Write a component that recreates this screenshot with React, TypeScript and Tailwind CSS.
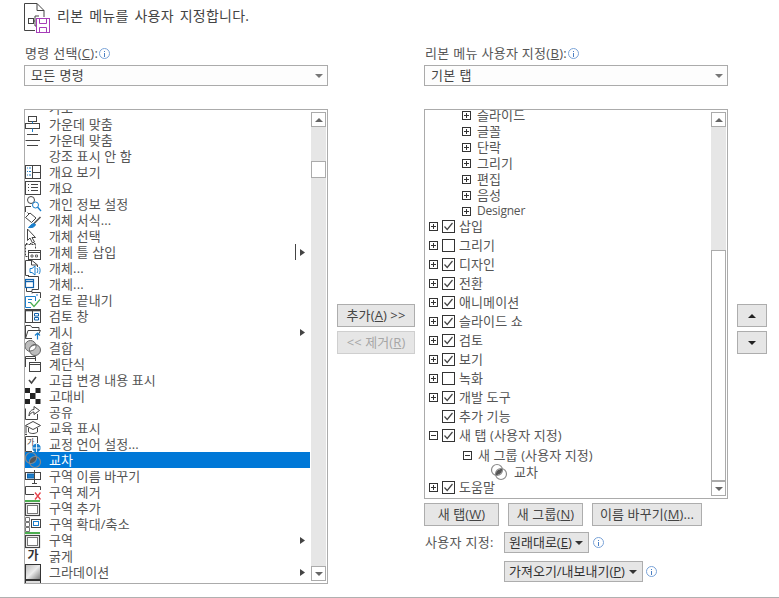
import type { ReactNode } from "react";

const D = "#444444";
const B = "#1b7fcc";

function Ico({ children }: { children?: ReactNode }) {
  return (
    <svg width="16" height="16" viewBox="0 0 16 16" fill="none" stroke={D} strokeWidth="1" className="block shrink-0 overflow-visible">
      {children}
    </svg>
  );
}

function Intersect({ size = 16 }: { size?: number }) {
  return (
    <svg width={size} height={size} viewBox="0 0 16 16" fill="none" className="block shrink-0 overflow-visible">
      <circle cx="6" cy="6" r="5.5" stroke="#8a8a8a" strokeWidth="1.2" />
      <circle cx="10" cy="10" r="5.5" stroke="#8a8a8a" strokeWidth="1.2" />
      <path d="M5 11 C4.5 7.5 7 5 11 5 C11.5 8.5 8.5 11 5 11Z" fill="#555" />
    </svg>
  );
}

const icons: Record<string, ReactNode> = {
  top: (
    <Ico>
      <path d="M0.5 0V2.5H11L15 -1" />
    </Ico>
  ),
  alignC: (
    <Ico>
      <rect x="3.5" y="0.5" width="8" height="5" />
      <rect x="0.5" y="7.5" width="14" height="5" />
      <path d="M7.5 5.5V7.5M7.5 12.5V16" stroke={B} />
    </Ico>
  ),
  textC: (
    <Ico>
      <path d="M2 2.5H13M0.5 8.5H15M2 13.5H13" />
    </Ico>
  ),
  none: <Ico />,
  outlineView: (
    <Ico>
      <rect x="0.5" y="1.5" width="15" height="13" />
      <path d="M7.5 1.5V14.5M7.5 8.5H15.5" />
      <path d="M2 4H3M4 4H6M2 7.5H3M4 7.5H6M2 11H3M4 11H6" stroke={B} />
    </Ico>
  ),
  outline: (
    <Ico>
      <rect x="0.5" y="1.5" width="15" height="13" />
      <path d="M3 4.5H4M6 4.5H13M3 7.5H4M6 7.5H13M3 10.5H4M6 10.5H13" />
    </Ico>
  ),
  privacy: (
    <Ico>
      <circle cx="6" cy="4" r="3.5" />
      <path d="M0.5 16V10.5H6" />
      <circle cx="10.5" cy="9" r="3" stroke={B} />
      <path d="M12.5 11L16 15" stroke={B} strokeWidth="1.4" />
    </Ico>
  ),
  format: (
    <Ico>
      <path d="M0.5 5.5L5 1L11 6L6.5 10.5Z" />
      <path d="M4 2L2.5 0.5" />
      <path d="M15.5 5L8.5 12" stroke="#555" strokeWidth="1.6" />
      <path d="M8.5 11.5C6.5 12 5 14 3.5 15.5C7 16 10 15 10.5 12.5Z" fill={B} stroke={B} />
    </Ico>
  ),
  select: (
    <Ico>
      <path d="M2.5 1V12.5L5 10L7.5 15L9.5 14L7 9.5H10.5Z" fill="#fff" />
      <path d="M1 15.5H2.5M5 15.5H6.5M9 15.5H10.5" />
    </Ico>
  ),
  placeholder: (
    <Ico>
      <path d="M0.5 0.5H10.5V5M0.5 0.5V12.5H3" strokeDasharray="2 1" />
      <rect x="3.5" y="6.5" width="12" height="9" fill="#fff" />
      <path d="M3.5 8.5H15.5" />
      <path d="M6 11H8V13H6ZM10.5 11H12.5V13H10.5Z" strokeWidth="0.8" />
    </Ico>
  ),
  audio: (
    <Ico>
      <path d="M4 15.5H0.5V0.5H7L12.5 5V7" />
      <path d="M6.5 0.5V5H12.5" />
      <path d="M5 8.5V12.5H7L10 15V6L7 8.5Z" stroke={B} fill="#fff" />
      <path d="M12 8C13 9.5 13 11.5 12 13M14 7C15.5 9 15.5 12 14 14" stroke={B} />
    </Ico>
  ),
  object: (
    <Ico>
      <path d="M3 0.5H13.5V13.5H7V15.5H1.5V12" />
      <rect x="0.5" y="3.5" width="8" height="8" stroke="#0f62ac" strokeWidth="1.2" fill="#fff" />
      <path d="M0.5 5.5H8.5" stroke="#0f62ac" strokeWidth="1.4" />
    </Ico>
  ),
  endReview: (
    <Ico>
      <path d="M7 1.5V0.5H15.5V6" />
      <path d="M0.5 4.5H10.5V9M0.5 4.5V15.5H6" stroke={B} />
      <path d="M3 7.5H7M3 10.5H6M11 3H13" stroke={B} />
      <path d="M5.5 10.5L9 14.5L15 7.5" stroke="#4caf50" strokeWidth="1.2" />
    </Ico>
  ),
  pane: (
    <Ico>
      <rect x="0.5" y="1.5" width="15" height="13" />
      <path d="M0.5 2.5H15.5" strokeWidth="1.6" />
      <path d="M7.5 3V14.5" />
      <path d="M9.5 5.5H13.5V8H9.5ZM9.5 9.5H13.5V12H9.5Z" stroke="#0f62ac" />
    </Ico>
  ),
  publish: (
    <Ico>
      <path d="M0.5 14.5V1.5H5.5L7 3.5H14V6.5M0.5 14.5H7M0.5 14.5L3 6.5H15.5L13 11" />
      <path d="M12.5 15.5V9M10 11.5L12.5 9L15 11.5" stroke={B} strokeWidth="1.2" />
    </Ico>
  ),
  combine: (
    <Ico>
      <circle cx="5.5" cy="6" r="5.5" fill="#bdbdbd" stroke="#666" />
      <circle cx="10" cy="10" r="5.5" fill="#bdbdbd" stroke="#666" />
      <path d="M4.5 11 C4 7.5 6.5 5 11 5 C11.5 8.5 8.5 11 4.5 11Z" fill="#fff" stroke="#666" />
    </Ico>
  ),
  cascade: (
    <Ico>
      <path d="M0.5 11V0.5H10.5V5" />
      <path d="M0.5 2.5H10.5" />
      <rect x="4.5" y="6.5" width="11" height="9" fill="#fff" />
      <path d="M4.5 8.5H15.5" />
    </Ico>
  ),
  check: (
    <Ico>
      <path d="M4 8L6.5 11L11 5" stroke={D} strokeWidth="1.6" />
    </Ico>
  ),
  contrast: (
    <Ico>
      <path d="M0 0H5V5H0ZM10.5 0H15.5V5H10.5ZM5 5H10.5V11H5ZM0 11H5V16H0ZM10.5 11H15.5V16H10.5Z" fill="#222" stroke="none" />
    </Ico>
  ),
  share: (
    <Ico>
      <path d="M0.5 4.5V15.5H12.5V10" />
      <path d="M4 12C4 7.5 6.5 5.5 9 5.5V2.5L14.5 6.5L9 10.5V8C7 8 5 9.5 4 12Z" fill="#fff" />
    </Ico>
  ),
  edu: (
    <Ico>
      <path d="M0.5 5.5L8 1.5L15.5 5.5L8 9.5Z" />
      <path d="M3.5 8V12C5.5 14 10 14 12.5 12V8" />
      <path d="M1 6V13.5M0 14.5H2" />
    </Ico>
  ),
  lang: (
    <Ico>
      <path d="M12.5 7V0.5H0.5V15.5H7" />
      <text x="2" y="8.5" fontSize="8" fill={D} stroke="none" fontFamily="Noto Sans CJK KR">가</text>
      <circle cx="11.5" cy="12" r="4.2" fill={B} stroke="none" />
      <path d="M7.5 12H15.5M11.5 8V16" stroke="#fff" strokeWidth="0.9" />
    </Ico>
  ),
  intersect: <Intersect />,
  renameSection: (
    <Ico>
      <rect x="0.5" y="4.5" width="15" height="7" />
      <rect x="2.5" y="6" width="7" height="4" fill={B} stroke="#0f62ac" />
      <path d="M9.5 2V15.5M7 15.5H12" />
    </Ico>
  ),
  removeSection: (
    <Ico>
      <path d="M15.5 6V2.5H0.5V10.5H9" />
      <path d="M10 8.5L15.5 15.5M15.5 8.5L10 15.5" stroke="#e8404a" strokeWidth="1.3" />
    </Ico>
  ),
  addSection: (
    <Ico>
      <path d="M0 1H15" stroke="#4caf50" strokeWidth="2" />
      <rect x="0.5" y="3.5" width="14" height="12" strokeWidth="1.2" />
      <rect x="2.5" y="5.5" width="10" height="8" stroke="#777" />
    </Ico>
  ),
  zoomSection: (
    <Ico>
      <path d="M0.5 1.5H4.5V5.5H0.5ZM0.5 6.5H4.5V10.5H0.5ZM0.5 11.5H4.5V15.5H0.5Z" stroke="#777" />
      <rect x="6.5" y="3.5" width="9" height="8" />
      <rect x="8.5" y="5.5" width="5" height="4" stroke={B} />
    </Ico>
  ),
  section: (
    <Ico>
      <path d="M0 1H15" stroke="#4caf50" strokeWidth="2" />
      <rect x="0.5" y="3.5" width="14" height="12" strokeWidth="1.2" />
      <rect x="2.5" y="5.5" width="10" height="8" stroke="#777" />
    </Ico>
  ),
  bold: (
    <span className="flex h-4 w-4 shrink-0 items-center justify-center text-[12px] font-semibold leading-none text-[#333]">가</span>
  ),
  gradient: (
    <svg width="16" height="16" viewBox="0 0 16 16" className="block shrink-0">
      <defs>
        <linearGradient id="grad" x1="0" y1="0" x2="1" y2="1">
          <stop offset="0" stopColor="#bbb" />
          <stop offset="0.5" stopColor="#ececec" />
          <stop offset="1" stopColor="#777" />
        </linearGradient>
      </defs>
      <rect x="0.5" y="0.5" width="15" height="15" fill="url(#grad)" stroke="#333" />
    </svg>
  ),
  last: (
    <svg width="16" height="16" viewBox="0 0 16 16" className="block shrink-0 overflow-visible">
      <rect x="0.5" y="0.5" width="15" height="15" fill="#ddd" stroke="#333" />
    </svg>
  ),
};

type Cmd = { label: string; icon: string; sub?: boolean; split?: boolean; active?: boolean };

const commands: Cmd[] = [
  { label: "가로", icon: "top" },
  { label: "가운데 맞춤", icon: "alignC" },
  { label: "가운데 맞춤", icon: "textC" },
  { label: "강조 표시 안 함", icon: "none" },
  { label: "개요 보기", icon: "outlineView" },
  { label: "개요", icon: "outline" },
  { label: "개인 정보 설정", icon: "privacy" },
  { label: "개체 서식...", icon: "format" },
  { label: "개체 선택", icon: "select" },
  { label: "개체 틀 삽입", icon: "placeholder", sub: true, split: true },
  { label: "개체...", icon: "audio" },
  { label: "개체...", icon: "object" },
  { label: "검토 끝내기", icon: "endReview" },
  { label: "검토 창", icon: "pane" },
  { label: "게시", icon: "publish", sub: true },
  { label: "결합", icon: "combine" },
  { label: "계단식", icon: "cascade" },
  { label: "고급 변경 내용 표시", icon: "check" },
  { label: "고대비", icon: "contrast" },
  { label: "공유", icon: "share" },
  { label: "교육 표시", icon: "edu" },
  { label: "교정 언어 설정...", icon: "lang" },
  { label: "교차", icon: "intersect", active: true },
  { label: "구역 이름 바꾸기", icon: "renameSection" },
  { label: "구역 제거", icon: "removeSection" },
  { label: "구역 추가", icon: "addSection" },
  { label: "구역 확대/축소", icon: "zoomSection" },
  { label: "구역", icon: "section", sub: true },
  { label: "굵게", icon: "bold" },
  { label: "그라데이션", icon: "gradient", sub: true },
  { label: "", icon: "last" },
];

function Info() {
  return (
    <span className="flex h-[11px] w-[11px] shrink-0 items-center justify-center rounded-full border border-[#7aa3d8]">
      <span className="flex flex-col items-center gap-px">
        <span className="h-px w-px bg-[#4a7fc4]" />
        <span className="h-1 w-px bg-[#4a7fc4]" />
      </span>
    </span>
  );
}

function Caret({ down = true, color = "#555" }: { down?: boolean; color?: string }) {
  return (
    <svg width="8" height="4" viewBox="0 0 8 4" className="block shrink-0">
      <path d={down ? "M0 0H8L4 4Z" : "M0 4H8L4 0Z"} fill={color} />
    </svg>
  );
}

function Label({ children }: { children: ReactNode }) {
  return <div className="flex h-[19px] items-center gap-px pb-1 pl-px text-[13px] leading-none tracking-[0.3px] text-[#555]">{children}</div>;
}

function Combo({ text }: { text: string }) {
  return (
    <div className="flex h-[21px] items-center justify-between border border-[#ababab] bg-[#fdfdfd] pl-1.5 pr-1 text-[13px] tracking-[0.4px] text-[#444]">
      <span>{text}</span>
      <Caret color="#777" />
    </div>
  );
}

function ScrollBar({ thumbTop, thumbH }: { thumbTop: number; thumbH: number }) {
  return (
    <div className="flex w-[15px] shrink-0 flex-col self-stretch bg-[#e6e6e6]">
      <div className="flex h-[15px] items-center justify-center border border-[#ababab] bg-white">
        <Caret down={false} color="#666" />
      </div>
      <div className="flex flex-1 flex-col">
        <div style={{ height: thumbTop }} />
        <div className="border border-[#ababab] bg-white" style={{ height: thumbH }} />
      </div>
      <div className="flex h-[15px] items-center justify-center border border-[#ababab] bg-white">
        <Caret color="#666" />
      </div>
    </div>
  );
}

function CommandRow({ c }: { c: Cmd }) {
  return (
    <div className={`flex h-4 items-center text-[13px] leading-none tracking-[0.1px] ${c.active ? "bg-[#0078d7] text-white" : "text-[#555]"}`}>
      <span className="w-6 shrink-0">{icons[c.icon]}</span>
      <span className="flex-1 whitespace-nowrap">{c.label}</span>
      {c.split && <span className="mr-1 h-4 w-px bg-[#444]" />}
      {c.sub && (
        <svg width="5" height="7" viewBox="0 0 5 7" className="mr-[5px] block shrink-0">
          <path d="M0 0L5 3.5L0 7Z" fill="#444" />
        </svg>
      )}
    </div>
  );
}

function Expander({ open = false }: { open?: boolean }) {
  return (
    <svg width="9" height="9" viewBox="0 0 9 9" className="block shrink-0">
      <rect x="0.5" y="0.5" width="8" height="8" fill="#fff" stroke="#333" />
      <path d={open ? "M2 4.5H7" : "M2 4.5H7M4.5 2V7"} stroke="#333" />
    </svg>
  );
}

function Check({ on }: { on: boolean }) {
  return (
    <svg width="13" height="13" viewBox="0 0 13 13" className="block shrink-0">
      <rect x="0.5" y="0.5" width="12" height="12" fill="#fff" stroke="#333" />
      {on && <path d="M2.5 6.5L5.2 9.5L10.5 3" fill="none" stroke="#444" strokeWidth="1.2" />}
    </svg>
  );
}

function SubGroup({ label }: { label: string }) {
  return (
    <div className="flex h-4 items-center gap-[6px] pl-[37px] text-[13px] leading-none tracking-[0.1px] text-[#555]">
      <Expander />
      <span className={label === "Designer" ? "text-[12px] tracking-[-0.2px]" : ""}>{label}</span>
    </div>
  );
}

function TabRow({ label, on, expander = "plus" }: { label: string; on: boolean; expander?: "plus" | "minus" | "none" }) {
  return (
    <div className="flex h-[19px] items-center pl-[4px] text-[13px] leading-none tracking-[0.1px] text-[#555]">
      <span className="w-[9px] shrink-0">{expander !== "none" && <Expander open={expander === "minus"} />}</span>
      <span className="ml-[4px]">
        <Check on={on} />
      </span>
      <span className="ml-1">{label}</span>
    </div>
  );
}

function Btn({ children, className = "" }: { children: ReactNode; className?: string }) {
  return (
    <div className={`flex h-[23px] items-center justify-center border border-[#adadad] bg-[#e6e6e6] text-[13px] leading-none tracking-[0.1px] text-[#444] ${className}`}>
      {children}
    </div>
  );
}

export default function App() {
  return (
    <div className="flex h-[598px] w-[779px] flex-col overflow-hidden border-b border-[#b0b0b0] bg-white font-['Open_Sans','Noto_Sans_CJK_KR',sans-serif]">
      <div className="flex h-[46px] shrink-0 items-start pl-6 pt-[3px]">
        <svg width="27" height="30" viewBox="0 0 27 30" fill="none" className="block shrink-0" stroke="#444">
          <path d="M11 27.5H0.5V0.5H13L20 7.5V14" />
          <path d="M13 0.5V7.5H20" />
          <rect x="4.5" y="15.5" width="5" height="5" />
          <path d="M9.5 18H11M11 13V23" />
          <path d="M11 13H15M11 23H12" />
          <rect x="12.5" y="15.5" width="13" height="14" stroke="#a63db8" fill="#fff" />
          <path d="M15.5 15.5V20.5H22.5V15.5M15.5 29.5V24.5H22.5V29.5" stroke="#a63db8" />
        </svg>
        <span className="ml-[6px] mt-1 text-[14px] leading-[18px] tracking-[0.25px] text-[#444] [word-spacing:2px]">리본 메뉴를 사용자 지정합니다.</span>
      </div>

      <div className="flex flex-1 items-start pl-6">
        <div className="w-[304px] shrink-0">
          <Label>
            <span>
              명령 선택(<span className="underline">C</span>):
            </span>
            <Info />
          </Label>
          <Combo text="모든 명령" />
          <div className="mt-[23px] flex h-[475px] overflow-hidden border border-[#ababab] bg-white">
            <div className="min-w-0 flex-1 overflow-hidden">
              <div className="-mt-[10px]">
                {commands.map((c, i) => (
                  <CommandRow key={i} c={c} />
                ))}
              </div>
            </div>
            <div className="flex w-[17px] shrink-0 flex-col py-[2px] pl-px">
              <div className="flex flex-1">
                <ScrollBar thumbTop={34} thumbH={17} />
              </div>
            </div>
          </div>
        </div>

        <div className="ml-[9px] flex w-[78px] shrink-0 flex-col gap-1 pt-[258px]">
          <Btn>
            추가(<span className="underline">A</span>)&nbsp;&gt;&gt;
          </Btn>
          <Btn className="border-[#cfcfcf] text-[#a6a6a6]">
            &lt;&lt; 제거(<span className="underline">R</span>)
          </Btn>
        </div>

        <div className="ml-[9px] w-[304px] shrink-0">
          <Label>
            <span>
              리본 메뉴 사용자 지정(<span className="underline">B</span>):
            </span>
            <Info />
          </Label>
          <Combo text="기본 탭" />
          <div className="mt-[23px] flex h-[390px] overflow-hidden border border-[#ababab] bg-white">
            <div className="min-w-0 flex-1 overflow-hidden">
              <div className="-mt-[3px]">
                {["슬라이드", "글꼴", "단락", "그리기", "편집", "음성", "Designer"].map((s) => (
                  <SubGroup key={s} label={s} />
                ))}
                <div className="-mt-[2px]">
                  <TabRow label="삽입" on />
                  <TabRow label="그리기" on={false} />
                  <TabRow label="디자인" on />
                  <TabRow label="전환" on />
                  <TabRow label="애니메이션" on />
                  <TabRow label="슬라이드 쇼" on />
                  <TabRow label="검토" on />
                  <TabRow label="보기" on />
                  <TabRow label="녹화" on={false} />
                  <TabRow label="개발 도구" on />
                  <TabRow label="추가 기능" on expander="none" />
                  <TabRow label="새 탭 (사용자 지정)" on expander="minus" />
                </div>
                <div className="flex h-5 items-center gap-[6px] pl-[38px] text-[13px] leading-none tracking-[0.1px] text-[#555]">
                  <Expander open />
                  <span>새 그룹 (사용자 지정)</span>
                </div>
                <div className="-mt-px flex h-4 items-center gap-[7px] pl-[66px] text-[13px] leading-none tracking-[0.1px] text-[#555]">
                  <Intersect />
                  <span>교차</span>
                </div>
                <div className="-mt-[2px]">
                  <TabRow label="도움말" on />
                </div>
              </div>
            </div>
            <div className="flex w-[17px] shrink-0 flex-col py-[2px] pl-px">
              <div className="flex flex-1">
                <ScrollBar thumbTop={123} thumbH={231} />
              </div>
            </div>
          </div>

          <div className="mt-1 flex gap-[9px]">
            <Btn className="w-[75px]">
              새 탭(<span className="underline">W</span>)
            </Btn>
            <Btn className="w-[75px]">
              새 그룹(<span className="underline">N</span>)
            </Btn>
            <Btn className="w-[110px]">
              이름 바꾸기(<span className="underline">M</span>)...
            </Btn>
          </div>

          <div className="mt-1.5 flex items-center">
            <span className="w-20 pl-px text-[13px] leading-none tracking-[0.3px] text-[#555]">사용자 지정:</span>
            <div className="flex h-[21px] w-[85px] items-center justify-between border border-[#adadad] bg-[#e6e6e6] pl-[4px] pr-[5px] text-[13px] leading-none text-[#333]">
              <span>
                원래대로(<span className="underline">E</span>)
              </span>
              <Caret color="#333" />
            </div>
            <span className="ml-[4px]">
              <Info />
            </span>
          </div>

          <div className="mt-2 flex items-center pl-20">
            <div className="flex h-[21px] w-[139px] items-center justify-between border border-[#adadad] bg-[#e6e6e6] pl-[4px] pr-[5px] text-[13px] leading-none text-[#333]">
              <span>
                가져오기/내보내기(<span className="underline">P</span>)
              </span>
              <Caret color="#333" />
            </div>
            <span className="ml-[3px]">
              <Info />
            </span>
          </div>
        </div>

        <div className="ml-[9px] flex w-[30px] shrink-0 flex-col gap-1 pt-[258px]">
          <Btn>
            <Caret down={false} color="#222" />
          </Btn>
          <Btn>
            <Caret color="#222" />
          </Btn>
        </div>
      </div>
    </div>
  );
}
